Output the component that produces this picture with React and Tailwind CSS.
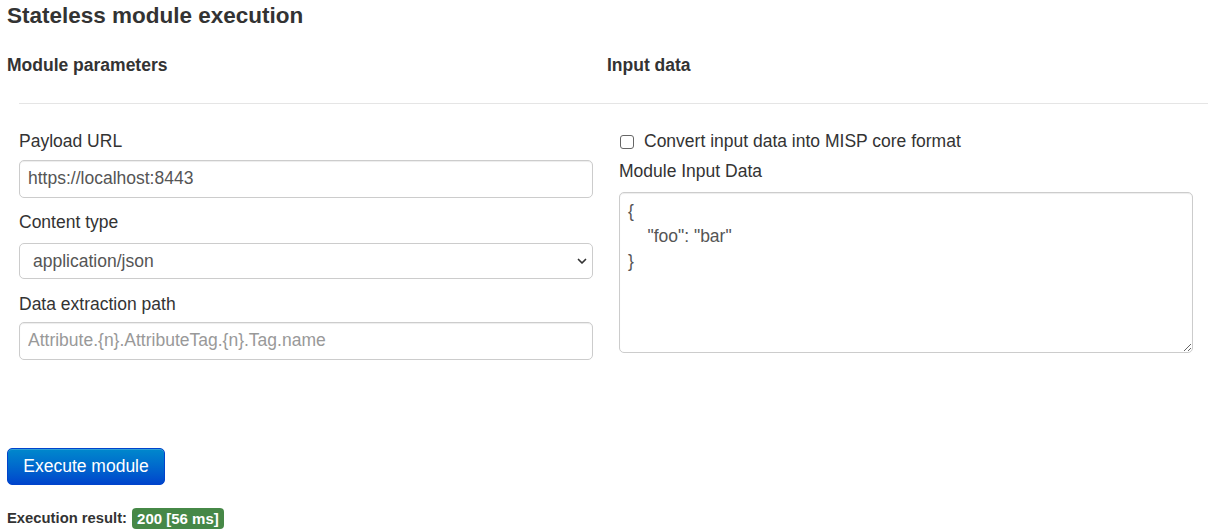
import React from "react";

export default function App() {
  const font = { fontFamily: '"Liberation Sans", Arial, Helvetica, sans-serif' };
  return (
    <div className="w-[1208px] h-[531px] bg-white text-[#333] overflow-hidden" style={font}>
      <div className="pl-[7px]">
        <h3 className="mt-[2px] text-[22.5px] leading-[27px] font-bold">Stateless module execution</h3>
        <div className="grid grid-cols-[588px_588px] gap-x-[12px] mt-[23.5px]">
          <h4 className="text-[17.5px] leading-[25px] font-bold">Module parameters</h4>
          <h4 className="text-[17.5px] leading-[25px] font-bold">Input data</h4>
        </div>
      </div>
      <div className="ml-[19px] mt-[25.5px] border-t border-[#e5e5e5]" />
      <div className="pl-[7px] grid grid-cols-[588px_588px] gap-x-[12px] mt-[25px] text-[17.5px] leading-[25px]">
        <div className="pl-[12px] w-[586px] flex flex-col">
          <label className="block">Payload URL</label>
          <input
            type="text"
            defaultValue="https://localhost:8443"
            className="mt-[6px] h-[37.5px] w-[574px] border border-[#ccc] rounded-[5px] px-[8px] text-[#555] bg-white shadow-[inset_0_1px_1px_rgba(0,0,0,0.075)] outline-none"
          />
          <label className="block mt-[12px]">Content type</label>
          <div className="relative mt-[8.5px] w-[574px] h-[36px]">
            <select
              defaultValue="application/json"
              className="appearance-none w-full h-full border border-[#ccc] rounded-[5px] pl-[13px] pr-[30px] text-[#555] bg-white outline-none"
            >
              <option value="application/json">application/json</option>
            </select>
            <svg
              className="absolute right-[5px] top-[12px] pointer-events-none"
              width="12"
              height="12"
              viewBox="0 0 12 12"
            >
              <path d="M2.5 4.5 L6 8 L9.5 4.5" fill="none" stroke="#333" strokeWidth="1.7" strokeLinecap="round" strokeLinejoin="round" />
            </svg>
          </div>
          <label className="block mt-[12.5px]">Data extraction path</label>
          <input
            type="text"
            placeholder="Attribute.{n}.AttributeTag.{n}.Tag.name"
            className="mt-[5.5px] h-[37.5px] w-[574px] border border-[#ccc] rounded-[5px] px-[8px] text-[#555] placeholder:text-[#999] bg-white shadow-[inset_0_1px_1px_rgba(0,0,0,0.075)] outline-none"
          />
        </div>
        <div className="pl-[12px] flex flex-col">
          <label className="flex items-center h-[25px]">
            <span className="ml-[1px] w-[14px] h-[14px] rounded-[3px] border border-[#666] bg-white shrink-0" />
            <span className="ml-[10px]">Convert input data into MISP core format</span>
          </label>
          <label className="block mt-[5px]">Module Input Data</label>
          <textarea
            defaultValue={'{\n    "foo": "bar"\n}'}
            className="mt-[8px] w-[574px] h-[161px] border border-[#ccc] rounded-[5px] px-[8px] py-[5.5px] text-[#555] leading-[25px] bg-white shadow-[inset_0_1px_1px_rgba(0,0,0,0.075)] outline-none"
          />
        </div>
      </div>
      <div className="pl-[7px] mt-[88px]">
        <button className="h-[37px] w-[158px] rounded-[5px] border border-[#0044cc] text-white text-[17.5px] bg-gradient-to-b from-[#0088cc] to-[#0044cc] shadow-[inset_0_1px_0_rgba(255,255,255,0.2)]">
          Execute module
        </button>
        <div className="mt-[23px] flex items-center h-[22px]">
          <span className="text-[14.8px] font-bold">Execution result:</span>
          <span className="ml-[5px] h-[21px] px-[5px] rounded-[4px] bg-[#468847] text-white text-[15px] font-bold leading-[21px]">
            200 [56 ms]
          </span>
        </div>
      </div>
    </div>
  );
}
